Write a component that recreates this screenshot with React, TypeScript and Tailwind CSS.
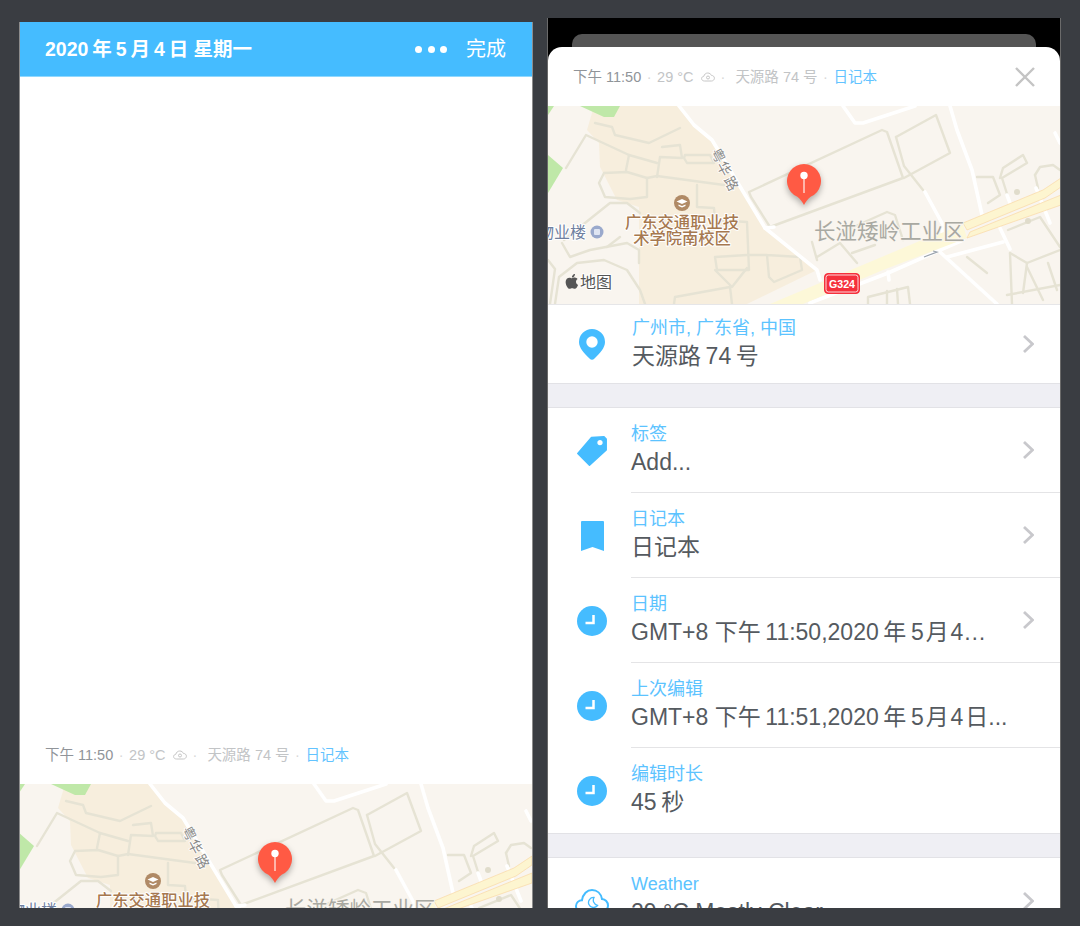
import React from 'react';

const tanRoads = [
  '47,17 64,21 67,29 101,37 132,22',
  '18,62 38,29 81,49 109,57',
  '114,41 132,39 134,52 112,51 109,71',
  '81,49 78,64',
  '56,67 79,66 99,72 99,91 82,93 57,91 51,77 56,67',
  '99,72 109,70 176,79',
  '137,49 162,49 166,57 139,57 136,52 137,49',
  '149,79 149,101 166,102 167,114 199,116 201,164 169,164 167,151 199,149',
  '167,164 184,181 199,162',
  '126,198 127,191 182,181 184,198',
  '201,149 219,149 252,151 254,164 226,176 221,171 219,149',
  '16,134 32,121 62,97 79,97 92,107',
  '14,137 22,151 42,144 79,137 91,144 91,157',
  '7,198 11,171 29,157 56,154 79,164 92,184 97,198',
  '59,141 72,131',
  '0,154 7,163 2,198',
  '201,86 334,24 339,26 355,72 222,121 203,91 201,86',
  '348,31 388,9 402,47 356,72',
  '348,31 356,60 375,84',
  '429,71 445,71 452,89 440,97',
  '452,72 455,62 475,49 479,57 454,72 460,91',
  '487,69 492,61 505,59 512,64',
  '487,69 490,82',
  '460,124 492,111 512,141',
  '462,147 479,157 512,144',
  '462,147 464,198',
  '479,157 475,187',
  '459,189 512,179',
  '479,161 495,194',
  '500,157 509,184',
  '264,136 269,154',
  '269,151 292,137 309,157',
  '304,147 327,139',
  '292,127 339,106 347,109 355,134',
  '320,198 320,191 360,181 362,198',
  '339,185 339,198',
  '349,183 350,198',
  '419,151 439,167',
];

const whiteRoads = [
  '131,0 146,19 164,34 217,122 269,164 272,174',
  '217,122 226,121',
  '295,0 307,17 315,17 367,0',
  '402,0 409,24 424,64 434,109',
  '507,27 512,37',
  '377,86 395,119 392,146 449,198',
  '399,151 455,136',
  '459,89 462,97',
  '452,122 462,143',
  '488,82 502,117',
  '340,166 341,174',
  '262,197 340,167 415,134',
];

function MapView() {
  const halo = 'stroke-white [stroke-width:2px] [paint-order:stroke] [stroke-linejoin:round]';
  return (
    <svg width="513" height="198" viewBox="0 0 513 198" className="block shrink-0">
      <rect width="513" height="198" fill="#f9f5ef" />
      <polygon points="46,0 131,0 146,19 164,34 217,122 269,164 199,198 91,198 91,101 69,94 52,61 51,37 39,24" fill="#f7eedd" />
      <polygon points="32,0 72,0 66,11 56,11" fill="#bfe8a8" />
      <polygon points="0,0 6,0 0,9" fill="#bfe8a8" />
      <polygon points="0,49 15,62 0,87" fill="#bfe8a8" />
      <g fill="none" stroke="#e6e3d4" strokeWidth="2.400" strokeLinejoin="round" strokeLinecap="round">
        {tanRoads.map((points) => (
          <polyline key={points} points={points} />
        ))}
      </g>
      <circle cx="469" cy="86" r="3" fill="#e0dccb" />
      <circle cx="480" cy="115" r="3" fill="#e0dccb" />
      <g fill="none" stroke="#ffffff" strokeWidth="3.600" strokeLinejoin="round" strokeLinecap="round">
        {whiteRoads.map((points) => (
          <polyline key={points} points={points} />
        ))}
      </g>
      {/* G324 highway */}
      <polygon points="222,198 374,134 415,119 419,132 335,164 255,198" fill="#fdf8d8" />
      <g fill="#fdf5d0" stroke="#f9d9a5" strokeWidth="0.700">
        <polygon points="415,117 495,84 513,72 513,81 497,92 419,124" />
        <polygon points="422,126 513,89 513,99 419,132" />
      </g>
      <polyline points="376,151 389,146 385,145" fill="none" stroke="#9aa3ad" strokeWidth="1.200" />

      {/* labels */}
      <g fontFamily="'Noto Sans CJK SC', sans-serif">
        <g fill="#8a8a88" fontSize="14" className="stroke-white [stroke-width:1.500px] [paint-order:stroke]">
          <text transform="translate(171 49) rotate(62)" textAnchor="middle" dominantBaseline="central">粤</text>
          <text transform="translate(177 62) rotate(62)" textAnchor="middle" dominantBaseline="central">华</text>
          <text transform="translate(184 77) rotate(62)" textAnchor="middle" dominantBaseline="central">路</text>
        </g>
        <circle cx="134" cy="97" r="8" fill="#b08a66" />
        <path d="M128.500 95.500 134 93l5.500 2.500-5.500 2.500zM130.500 98.500l3.500 1.500 3.500-1.500v1.500l-3.500 1.500-3.500-1.500z" fill="#ffffff" />
        <text x="134" y="122" textAnchor="middle" fontSize="16.300" fontWeight="500" fill="#a6784f" className={halo}>广东交通职业技</text>
        <text x="134" y="138" textAnchor="middle" fontSize="16.300" fontWeight="500" fill="#a6784f" className={halo}>术学院南校区</text>
        <text x="38" y="132" textAnchor="end" fontSize="16" fill="#6f7f9f" className={halo}>物业楼</text>
        <circle cx="49" cy="126" r="6.500" fill="#9aa9cc" />
        <rect x="46" y="123" width="6" height="6" rx="1" fill="#dfe5f2" />
        <path
          transform="translate(17.500 167) scale(0.033)"
          fill="#555555"
          d="M318.700 268.700c-.2-36.700 16.400-64.400 50-84.800-18.800-26.900-47.200-41.700-84.700-44.600-35.500-2.800-74.300 20.700-88.500 20.700-15 0-49.400-19.700-76.400-19.700C63.300 141.200 4 184.800 4 273.500q0 39.300 14.400 81.200c12.800 36.700 59 126.700 107.200 125.200 25.200-.6 43-17.900 75.800-17.900 31.800 0 48.300 17.900 76.400 17.900 48.600-.7 90.400-82.500 102.600-119.300-65.200-30.700-61.700-90-61.700-91.900zm-56.600-164.200c27.300-32.400 24.800-61.900 24-72.500-24.100 1.400-52 16.400-67.900 34.900-17.500 19.800-27.800 44.300-25.600 71.900 26.100 2 49.900-11.400 69.500-34.300z"
        />
        <text x="32" y="181.500" fontSize="16" fill="#555555" className={halo}>地图</text>
        <text x="266" y="133" fontSize="21.500" fill="#a9a9a2" className="stroke-[#f9f5ef] [stroke-width:2px] [paint-order:stroke]">长湴矮岭工业区</text>
      </g>

      {/* road shield */}
      <rect x="276.500" y="167.500" width="35" height="20" rx="3.500" fill="#f5303c" stroke="#f5303c" />
      <rect x="278" y="169" width="32" height="17" rx="2.500" fill="#f5303c" stroke="#ffffff" strokeWidth="0.800" />
      <text x="294" y="182" textAnchor="middle" fontSize="11.500" fontWeight="700" fill="#ffffff" fontFamily="'Liberation Sans', sans-serif" textLength="26" lengthAdjust="spacingAndGlyphs">G324</text>

      {/* pin */}
      <g className="drop-shadow-[0_3px_3px_rgba(0,0,0,0.3)]">
        <path d="M256 99c-1.500-3-4-6.500-7-8.500A17 17 0 1 1 263 90.500c-3 2-5.500 5.500-7 8.500z" fill="#ff5a44" />
      </g>
      <rect x="255.300" y="70" width="1.400" height="17" fill="#ffdcd5" />
      <circle cx="256" cy="69.500" r="3.700" fill="#ffffff" />
    </svg>
  );
}

function SmallCloud() {
  return (
    <svg width="14" height="10" viewBox="0 0 14 10" fill="none" stroke="#c6c6c6" strokeWidth="1">
      <path d="M3.500 9C1.800 9 .6 8 .6 6.600c0-1.300 1-2.200 2.200-2.300C3.200 2.400 4.800 1 6.800 1c1.700 0 3 1 3.600 2.400 1.700 0 3 1.200 3 2.800S12 9 10.500 9z" />
      <circle cx="7" cy="5.500" r="1.500" />
    </svg>
  );
}

function MetaLine() {
  return (
    <div className="flex items-center whitespace-nowrap text-[14.500px] leading-5 text-[#c2c4c6]">
      <span className="text-[#909499]">下午 11:50</span>
      <span className="mx-[5.500px] text-[#d8d8d8]">·</span>
      <span>29 °C</span>
      <span className="ml-[7px]"><SmallCloud /></span>
      <span className="ml-[6px] mr-[10px] text-[#d8d8d8]">·</span>
      <span>天源路 74 号</span>
      <span className="mx-[5.500px] text-[#d8d8d8]">·</span>
      <span className="text-[#62c3ff]">日记本</span>
    </div>
  );
}

function Chevron() {
  return (
    <svg width="12" height="20" viewBox="0 0 12 20" fill="none" stroke="#c8c8cc" strokeWidth="2.800" className="shrink-0">
      <path d="M2 2l8.500 8-8.500 8" />
    </svg>
  );
}

function PinIcon() {
  return (
    <svg width="26" height="31" viewBox="0 0 26 31">
      <path fillRule="evenodd" fill="#45bcff" d="M13 0a13 13 0 0 1 13 13c0 6-5 11-10.500 16.500a3.500 3.500 0 0 1-5 0C5 24 0 19 0 13A13 13 0 0 1 13 0zm0 7.300a5.700 5.700 0 1 0 0 11.400 5.700 5.700 0 0 0 0-11.400z" />
    </svg>
  );
}

function TagIcon() {
  return (
    <svg width="30" height="30" viewBox="0 0 30 30">
      <path fillRule="evenodd" fill="#45bcff" stroke="#45bcff" strokeWidth="1.500" strokeLinejoin="round" d="M14.500 1.500 27 .8 29.200 3v11L12.500 29.200 .8 17.500zM23 3.200a3.400 3.400 0 1 0 0 6.800A3.400 3.400 0 0 0 23 3.200z" />
    </svg>
  );
}

function BookmarkIcon() {
  return (
    <svg width="23" height="30" viewBox="0 0 23 30">
      <path fill="#45bcff" d="M1 0h21a1 1 0 0 1 1 1v29l-11.500-4L0 30V1a1 1 0 0 1 1-1z" />
    </svg>
  );
}

function ClockIcon() {
  return (
    <svg width="30" height="30" viewBox="0 0 30 30">
      <circle cx="15" cy="15" r="15" fill="#45bcff" />
      <path d="M8.500 17h8V9" fill="none" stroke="#ffffff" strokeWidth="2.500" />
    </svg>
  );
}

function WeatherIcon() {
  return (
    <svg width="34" height="26" viewBox="0 0 34 26" fill="none" stroke="#45bcff" strokeWidth="2">
      <path d="M8 24C4 24 1 21.500 1 18c0-3.300 2.800-5.800 6-5.800C8 6 12 2 17 2s9 3.500 10 9c3.300.3 6 3 6 6.500S30 24 26 24z" />
      <path d="M19 9.500a5 5 0 1 0 3.500 8 5.500 5.500 0 0 1-3.500-8z" strokeWidth="1.300" />
    </svg>
  );
}

interface RowProps {
  icon: React.ReactNode;
  label: string;
  value: string;
  chevron?: boolean;
  last?: boolean;
  compact?: boolean;
}

function Row({ icon, label, value, chevron = true, last = false, compact = false }: RowProps) {
  return (
    <div className="flex h-[85px] shrink-0 bg-white">
      <div className="flex w-[83px] shrink-0 items-center justify-center pl-[5px]">{icon}</div>
      <div className={`flex min-w-0 flex-1 items-center pr-[26px] ${last ? '' : 'border-b border-[#e4e4e6]'}`}>
        <div className={`min-w-0 flex-1 self-start ${compact ? 'pl-px pt-[11px]' : 'pt-[14px]'}`}>
          <div className="text-[18px] leading-6 text-[#5cc3ff]">{label}</div>
          <div className="whitespace-nowrap text-[23px] leading-8 text-[#555a5f]">{value}</div>
        </div>
        {chevron && <Chevron />}
      </div>
    </div>
  );
}

function SectionGap() {
  return <div className="h-[25px] shrink-0 border-y border-[#e2e2e6] bg-[#efeff4]" />;
}

export default function App() {
  return (
    <div className="flex h-[926px] w-[1080px] items-end gap-[14px] overflow-hidden bg-[#3a3d42] pb-[18px] pl-[19px] font-['Liberation_Sans','Noto_Sans_CJK_SC',sans-serif]">
      {/* note being edited */}
      <div className="flex h-[886px] w-[514px] flex-col overflow-hidden border-x border-[#8c8c8c] bg-white">
        <div className="flex h-[55px] shrink-0 items-center justify-between border-b border-[#8fd8ff] bg-[#45bcff] pl-[25px] pr-[26px] text-white">
          <div className="text-[19.500px] font-bold leading-6">2020{'\u2009'}年{'\u2009'}5{'\u2009'}月{'\u2009'}4{'\u2009'}日 星期一</div>
          <div className="flex items-center">
            <div className="flex gap-[5.500px]">
              <span className="h-[7px] w-[7px] rounded-full bg-white" />
              <span className="h-[7px] w-[7px] rounded-full bg-white" />
              <span className="h-[7px] w-[7px] rounded-full bg-white" />
            </div>
            <span className="ml-[19px] text-[20px] leading-6">完成</span>
          </div>
        </div>
        <div className="flex-1" />
        <div className="flex h-[58px] shrink-0 items-center pl-[25px]">
          <MetaLine />
        </div>
        <div className="-ml-px h-[124px] shrink-0 overflow-hidden">
          <MapView />
        </div>
      </div>

      {/* entry info sheet */}
      <div className="flex h-[890px] w-[514px] flex-col overflow-hidden border-x border-[#6a6a6a] bg-black pt-[16px]">
        <div className="mx-[24px] h-[13px] shrink-0 rounded-t-[10px] bg-[#555555]" />
        <div className="flex min-h-0 flex-1 flex-col overflow-hidden rounded-t-[14px] bg-white">
          <div className="flex h-[59px] shrink-0 items-center justify-between pl-[25px] pr-[25px]">
            <MetaLine />
            <svg width="20" height="20" viewBox="0 0 20 20" fill="none" stroke="#c4c4c4" strokeWidth="2.400">
              <path d="M1 1l18 18M19 1L1 19" />
            </svg>
          </div>
          <div className="h-[198px] shrink-0 overflow-hidden">
            <MapView />
          </div>
          <div className="h-[79px] shrink-0 overflow-hidden border-t border-[#e6e6e8] [&>div]:h-[78px]">
            <Row icon={<PinIcon />} label="广州市, 广东省, 中国" value={'天源路\u200974\u2009号'} last compact />
          </div>
          <SectionGap />
          <Row icon={<TagIcon />} label="标签" value="Add..." />
          <Row icon={<BookmarkIcon />} label="日记本" value="日记本" />
          <Row icon={<ClockIcon />} label="日期" value={'GMT+8 下午\u200911:50,2020\u2009年\u20095\u200a月\u200a4…'} />
          <Row icon={<ClockIcon />} label="上次编辑" value={'GMT+8 下午\u200911:51,2020\u2009年\u20095\u200a月\u200a4\u200a日...'} chevron={false} />
          <Row icon={<ClockIcon />} label="编辑时长" value={'45\u2009秒'} chevron={false} last />
          <SectionGap />
          <Row icon={<WeatherIcon />} label="Weather" value="29 °C Mostly Clear" last />
        </div>
      </div>
    </div>
  );
}
